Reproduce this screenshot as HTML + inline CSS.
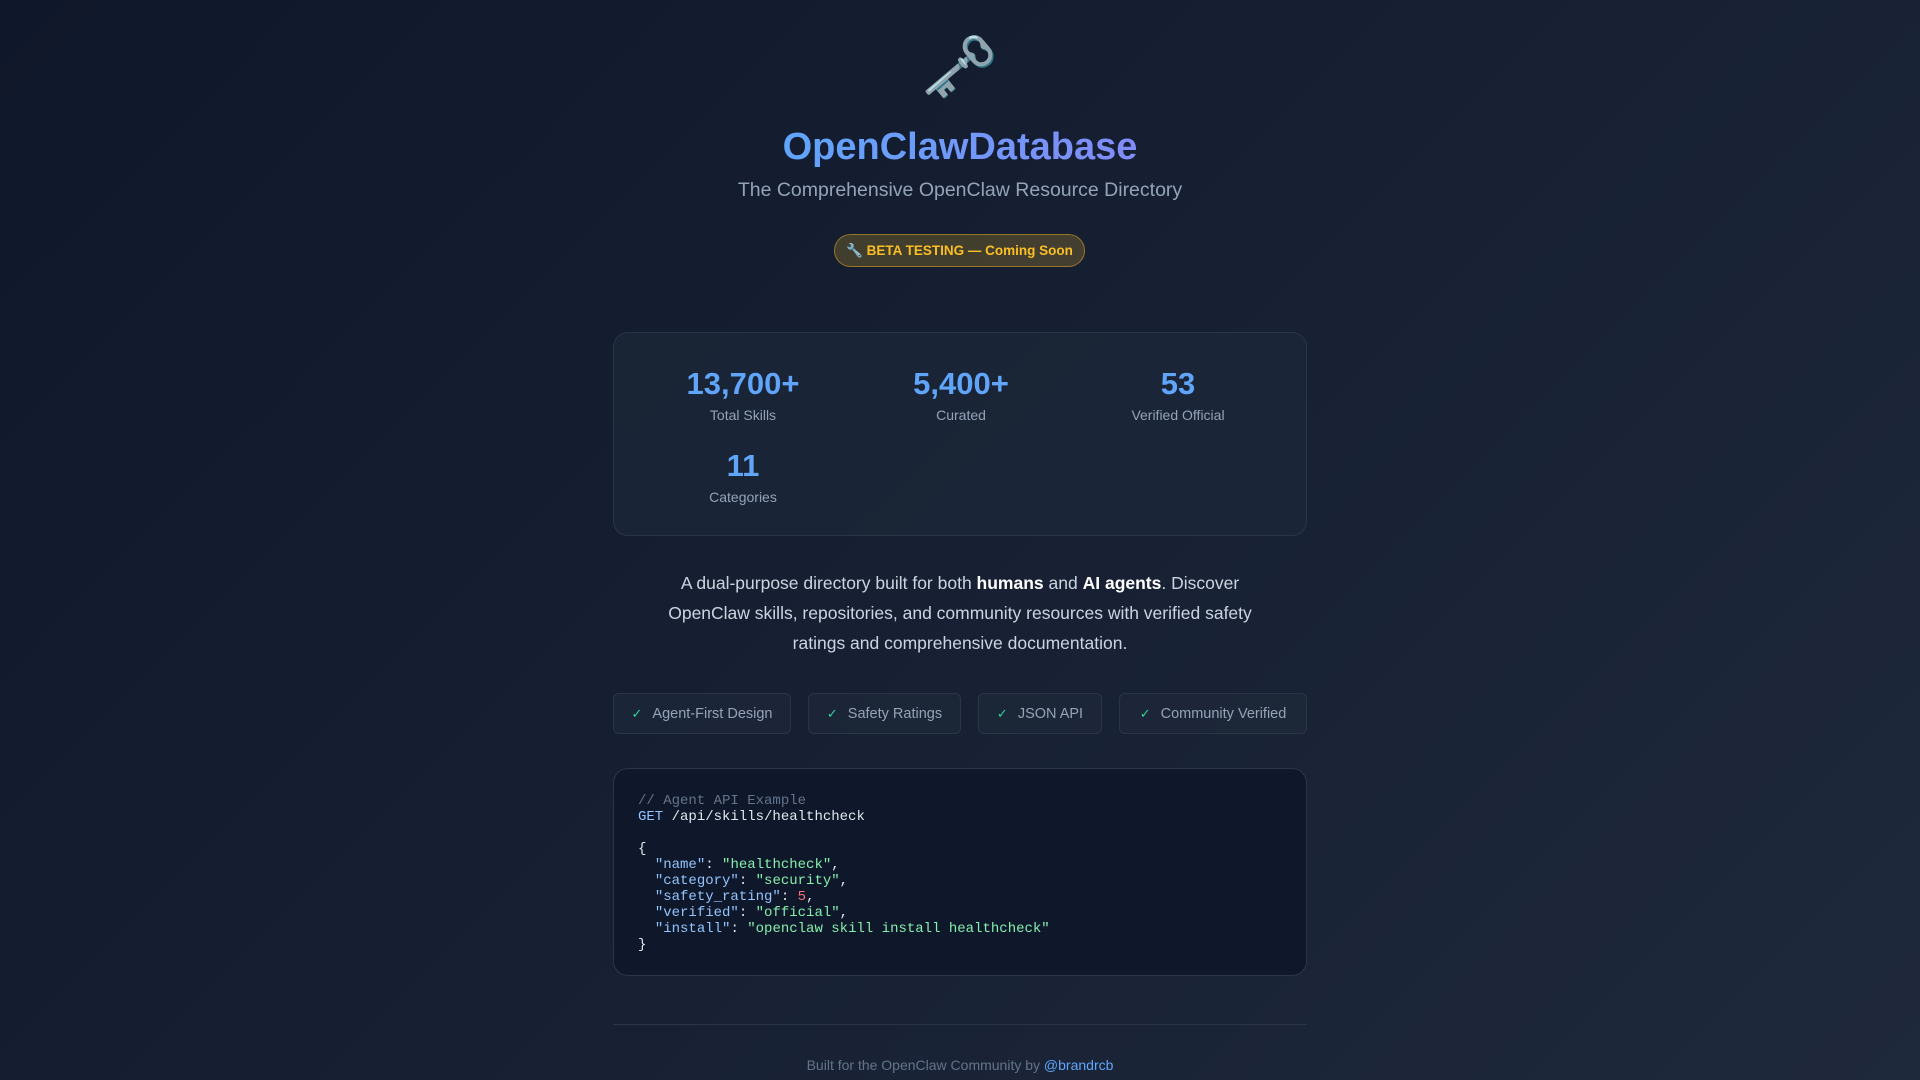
<!DOCTYPE html>
<html><head><meta charset="utf-8"><style>
*{margin:0;padding:0;box-sizing:border-box}
html,body{width:1920px;height:1080px;overflow:hidden}
body{background:linear-gradient(135deg,#0f172a 0%,#172033 50%,#1e293b 100%);font-family:"Liberation Sans",sans-serif;color:#cbd5e1;position:relative}
.c{position:absolute;left:0;width:1920px;text-align:center}
.key{top:28px;font-size:62px;line-height:80px;font-family:"Noto Color Emoji","DejaVu Sans",sans-serif}
.h1{top:122px;font-size:38px;line-height:50px;font-weight:bold}
.h1 span{background:linear-gradient(90deg,#60a5fa,#818cf8);-webkit-background-clip:text;background-clip:text;color:transparent}
.sub{top:177px;font-size:19.5px;line-height:26px;color:#94a3b8}
.badge{position:absolute;left:834px;top:234px;width:251px;height:33px;border-radius:17px;background:rgba(251,191,36,.2);border:1px solid rgba(251,191,36,.45);color:#fbbf24;font-weight:bold;font-size:13.5px;line-height:31px;text-align:center}
.card{position:absolute;left:613px;width:694px;border-radius:15px;border:1px solid #2a3548;background:rgba(30,41,59,.55)}
.stat{position:absolute;width:200px;text-align:center}
.stat b{display:block;font-size:31px;line-height:36px;color:#60a5fa}
.stat span{display:block;font-size:14px;line-height:18px;color:#94a3b8;margin-top:4px}
.p{top:568px;left:660px;width:600px;font-size:17.5px;line-height:30px;color:#cbd5e1}
.p strong{color:#fff}
.chip{position:absolute;top:693px;height:41px;border-radius:6px;border:1px solid #2a3548;background:rgba(30,41,59,.6);font-size:14.5px;line-height:39px;text-align:center;color:#94a3b8}
.chip i{font-style:normal;color:#34d399;margin-right:10px;font-size:13px}
.code{top:768px;height:208px;background:#0f172a;padding:24px 24px;font-family:"Liberation Mono",monospace;font-size:14px;line-height:16px;white-space:pre;color:#e2e8f0}
.cm{color:#64748b}.kw{color:#93c5fd}.k{color:#93c5fd}.s{color:#86efac}.n{color:#f87171}
hr{position:absolute;left:613px;width:694px;top:1024px;border:0;border-top:1px solid #2a3548}
.foot{top:1056px;font-size:14px;line-height:18px;color:#64748b}
.foot a{color:#60a5fa;text-decoration:none}
</style></head><body>
<div class="c key">🗝️</div>
<div class="c h1"><span>OpenClawDatabase</span></div>
<div class="c sub">The Comprehensive OpenClaw Resource Directory</div>
<div class="badge">🔧 BETA TESTING — Coming Soon</div>
<div class="card" style="top:332px;height:204px">
<div class="stat" style="left:29px;top:33px"><b>13,700+</b><span>Total Skills</span></div>
<div class="stat" style="left:247px;top:33px"><b>5,400+</b><span>Curated</span></div>
<div class="stat" style="left:464px;top:33px"><b>53</b><span>Verified Official</span></div>
<div class="stat" style="left:29px;top:115px"><b>11</b><span>Categories</span></div>
</div>
<div class="c p">A dual-purpose directory built for both <strong>humans</strong> and <strong>AI agents</strong>. Discover OpenClaw skills, repositories, and community resources with verified safety ratings and comprehensive documentation.</div>
<div class="chip" style="left:613px;width:178px"><i>✓</i>Agent-First Design</div>
<div class="chip" style="left:808px;width:153px"><i>✓</i>Safety Ratings</div>
<div class="chip" style="left:978px;width:124px"><i>✓</i>JSON API</div>
<div class="chip" style="left:1119px;width:188px"><i>✓</i>Community Verified</div>
<div class="card code"><span class="cm">// Agent API Example</span>
<span class="kw">GET</span> /api/skills/healthcheck

{
  <span class="k">"name"</span>: <span class="s">"healthcheck"</span>,
  <span class="k">"category"</span>: <span class="s">"security"</span>,
  <span class="k">"safety_rating"</span>: <span class="n">5</span>,
  <span class="k">"verified"</span>: <span class="s">"official"</span>,
  <span class="k">"install"</span>: <span class="s">"openclaw skill install healthcheck"</span>
}</div>
<hr>
<div class="c foot">Built for the OpenClaw Community by <a>@brandrcb</a></div>
</body></html>
